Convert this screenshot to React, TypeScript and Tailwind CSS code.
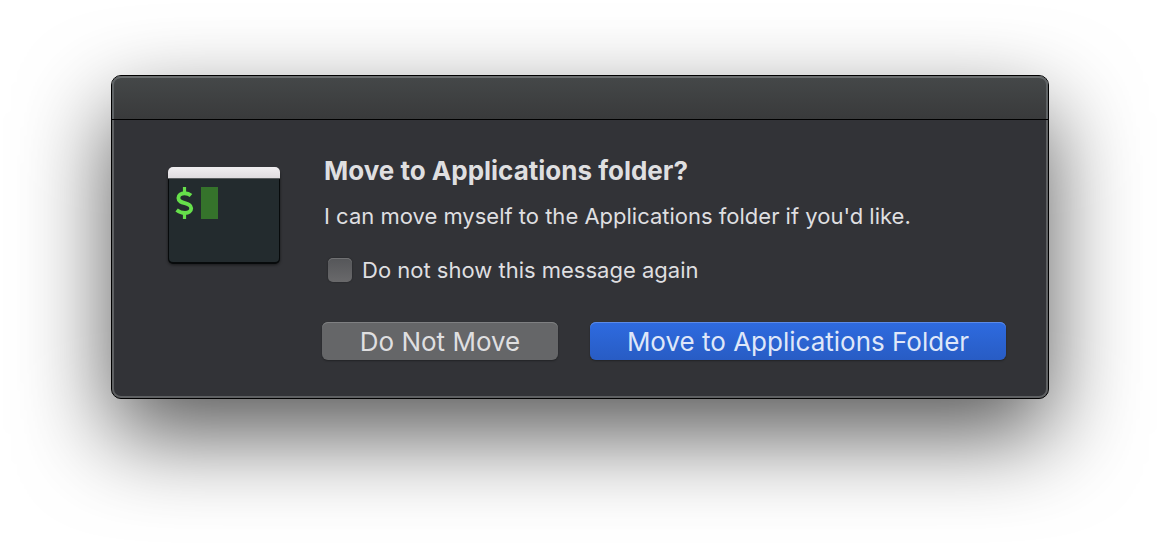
import { useState } from "react";

function TerminalIcon() {
  return (
    <svg viewBox="0 0 120 106" className="h-[106px] w-[120px]" aria-hidden="true">
      <defs>
        <linearGradient id="bar" x1="0" y1="0" x2="0" y2="1">
          <stop offset="0" stopColor="#f1eff1" />
          <stop offset="1" stopColor="#dedbde" />
        </linearGradient>
        <filter id="drop" x="-10%" y="-10%" width="120%" height="120%">
          <feGaussianBlur stdDeviation="1.5" />
        </filter>
      </defs>
      <rect x="4" y="6" width="112" height="95" rx="5" fill="#000" opacity="0.5" filter="url(#drop)" />
      <rect x="4" y="5" width="112" height="95" rx="5" fill="#070a0b" />
      <rect x="5" y="6" width="110" height="92" rx="4" fill="#232b2e" />
      <path d="M4 15V8a5 5 0 0 1 5-5h102a5 5 0 0 1 5 5v7z" fill="url(#bar)" />
      <path d="M4 14.5h112" stroke="#595c5e" strokeWidth="1" />
      <path
        d="M27 31.5C25.3 30 23 29.2 20.6 29.2C17 29.2 14.4 31.2 14.4 34C14.4 40.7 27.2 37.7 27.2 44.3C27.2 47.3 24.6 49 21 49C17.8 49 15.2 48 12.6 46"
        fill="none"
        stroke="#66e04b"
        strokeWidth="3.9"
      />
      <path d="M20.5 23v6M20.5 49v6" stroke="#66e04b" strokeWidth="3.2" />
      <rect x="37" y="23" width="17" height="32" fill="#35732b" />
    </svg>
  );
}

export default function App() {
  const [hide, setHide] = useState(false);
  return (
    <main className="min-h-screen overflow-hidden bg-white px-[111px] pt-[75px] pb-[147px] font-['Inter',sans-serif] text-[#dfdfe0]">
      <section
        role="dialog"
        aria-labelledby="title"
        className="rounded-[10px] border border-black bg-[#323337] shadow-[0_36px_90px_rgba(0,0,0,0.66)]"
      >
        <div className="rounded-[9px] shadow-[inset_0_0_0_2px_#5f6163]">
          <header className="h-11 rounded-t-[9px] border-b border-black bg-linear-to-b from-[#454849] to-[#393a3b] shadow-[inset_2px_0_0_#5f6365,inset_-2px_0_0_#5f6365,inset_0_2px_0_#6b6e6f]" />
          <div className="flex items-start pt-[35px] pr-[42px] pb-[38px] pl-[52px]">
            <div className="mt-[9px] mr-[38px] shrink-0">
              <TerminalIcon />
            </div>
            <div className="grow">
              <div className="pl-0.5">
                <h1 id="title" className="text-[26px] leading-8 font-bold">
                  Move to Applications folder?
                </h1>
                <p className="mt-[15px] text-[22px] leading-7 font-[425]">
                  I can move myself to the Applications folder if you'd like.
                </p>
                <label className="mt-[26px] flex items-center pl-1 text-[22px] leading-7 font-[425]">
                  <input
                    type="checkbox"
                    checked={hide}
                    onChange={(e) => setHide(e.target.checked)}
                    className="mr-[10px] size-6 appearance-none rounded-[5px] bg-linear-to-b from-[#555659] to-[#69696b] shadow-[inset_0_1px_0_#707173,0_0_2px_rgba(0,0,0,0.4)] checked:from-[#2f6de0] checked:to-[#285fc8]"
                  />
                  Do not show this message again
                </label>
              </div>
              <div className="mt-[38px] flex gap-8 text-[26px] leading-9">
                <button
                  type="button"
                  className="w-[236px] rounded-[6px] bg-[#656668] pt-0.5 shadow-[inset_0_1px_0_#7f8082,0_1px_2px_rgba(0,0,0,0.35)]"
                >
                  Do Not Move
                </button>
                <button
                  type="button"
                  className="grow rounded-[6px] bg-linear-to-b from-[#2e6be0] to-[#285cc4] pt-0.5 text-[#dfe7f9] shadow-[inset_0_1px_0_#5b8be8,0_1px_2px_rgba(0,0,0,0.35)]"
                >
                  Move to Applications Folder
                </button>
              </div>
            </div>
          </div>
        </div>
      </section>
    </main>
  );
}
